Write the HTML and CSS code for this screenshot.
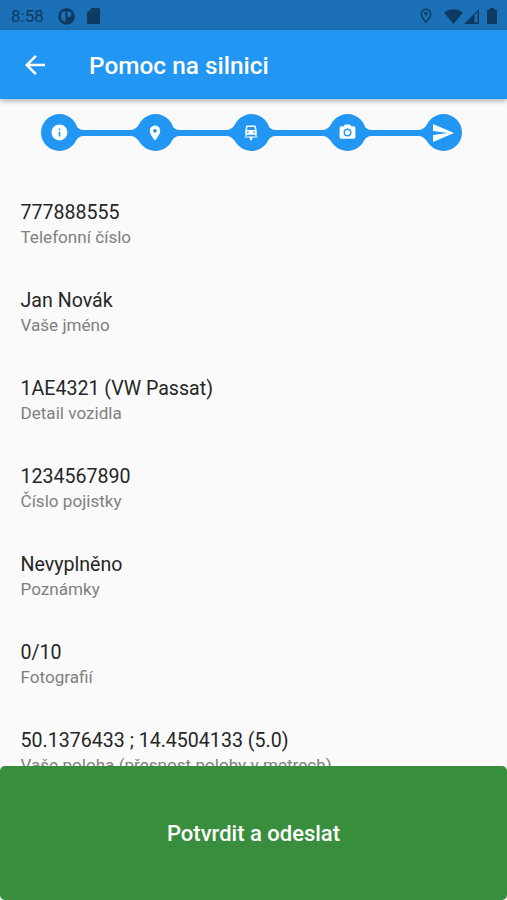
FILE: index.html
```html
<!DOCTYPE html>
<html lang="cs">
<head>
  <meta charset="UTF-8">
  <title>Pomoc na silnici</title>
  <link rel="stylesheet" href="styles.css">
</head>
<body>
  <div class="statusbar">
    <span class="time">8:58</span>
    <svg class="app-icon" width="17" height="17" viewBox="0 0 17 17"><circle cx="8.5" cy="8.5" r="8.3" fill="#0c3a60"/><path d="M3.600 4.500q1-1 2.300-1.200h1.600v10.500q-4.500-1-4.700-5z" fill="#1b70b6"/><path d="M9.200 3.500h1.500a2.700 2.700 0 0 1 0 5.400H9.200z" fill="#1b70b6"/></svg>
    <svg class="sd-icon" width="13" height="16" viewBox="4 2 16 20" preserveAspectRatio="none"><path fill="#0c3a60" d="M18 2h-8L4 8v12c0 1.100.9 2 2 2h12c1.100 0 2-.9 2-2V4c0-1.100-.9-2-2-2z"/><path d="M10 5v3M13 5v3M16 5v3" stroke="#164f80" stroke-width="1.200"/></svg>
    <span class="spacer"></span>
    <svg class="pin-icon" width="12" height="16" viewBox="0 0 12 16"><path d="M6 1.200a4.600 4.600 0 0 0-4.600 4.600C1.400 9.200 6 14.300 6 14.300s4.600-5.100 4.600-8.500A4.600 4.600 0 0 0 6 1.200z" fill="none" stroke="#0c3a60" stroke-width="1.400"/><circle cx="6" cy="5.800" r="1.700" fill="#0c3a60"/></svg>
    <svg class="wifi-icon" width="19" height="15" viewBox="0 0 19 15"><path d="M0 3.600Q9.500-3.200 19 3.600L9.500 15z" fill="#0c3a60"/></svg>
    <svg class="signal-icon" width="15" height="15" viewBox="0 0 15 15"><path d="M15 0v15H0z" fill="#0c3a60"/><path d="M10.600 6l2.900-2.800v10.300h-2.900z" fill="#1b70b6"/></svg>
    <svg class="battery-icon" width="10" height="16" viewBox="0 0 10 16"><path d="M3 0h4v1.600h2q1 0 1 1V15q0 1-1 1H1q-1 0-1-1V2.600q0-1 1-1h2z" fill="#0c3a60"/></svg>
  </div>

  <header class="toolbar">
    <svg class="back" width="30" height="30" viewBox="0 0 24 24"><path fill="#fff" d="M20 11H7.830l5.590-5.590L12 4l-8 8 8 8 1.410-1.410L7.830 13H20v-2z"/></svg>
    <h1>Pomoc na silnici</h1>
  </header>

  <nav class="stepper">
    <div class="step">
      <svg width="19" height="19" viewBox="0 0 24 24"><path d="M12 2C6.480 2 2 6.480 2 12s4.480 10 10 10 10-4.480 10-10S17.520 2 12 2zm1 15h-2v-6h2v6zm0-8h-2V7h2v2z"/></svg>
    </div>
    <svg class="connector" width="68" height="24" viewBox="0 0 68 24"><path d="M0 1Q5 9 10 9H58Q63 9 68 1V23Q63 15 58 15H10Q5 15 0 23z"/></svg>
    <div class="step">
      <svg width="18" height="18" viewBox="0 0 24 24"><path d="M12 2C8.130 2 5 5.130 5 9c0 5.250 7 13 7 13s7-7.750 7-13c0-3.870-3.130-7-7-7zm0 9.500c-1.380 0-2.500-1.120-2.500-2.500s1.120-2.500 2.500-2.500 2.500 1.120 2.500 2.500-1.120 2.500-2.500 2.500z"/></svg>
    </div>
    <svg class="connector" width="68" height="24" viewBox="0 0 68 24"><path d="M0 1Q5 9 10 9H58Q63 9 68 1V23Q63 15 58 15H10Q5 15 0 23z"/></svg>
    <div class="step">
      <!-- car being towed -->
      <svg width="14" height="16" viewBox="0 0 14 16"><path fill-rule="evenodd" d="M3.300.5h7.400q1 0 1.200 1l.8 4v5.200h-1.500v-1H2.800v1H1.300V5.500l.8-4q.200-1 1.200-1zM3.500 1.900L2.900 5.100h8.200l-.6-3.200zM3.100 6.600v1.500h1.500V6.600zm6.300 0v1.500h1.500V6.600z"/><path d="M.5 11.400h13v1.200H8.400l-.5 2.600H6.100l-.5-2.600H.5z"/></svg>
    </div>
    <svg class="connector" width="68" height="24" viewBox="0 0 68 24"><path d="M0 1Q5 9 10 9H58Q63 9 68 1V23Q63 15 58 15H10Q5 15 0 23z"/></svg>
    <div class="step">
      <svg width="19" height="19" viewBox="0 0 24 24"><path fill-rule="evenodd" d="M9 2L7.170 4H4c-1.100 0-2 .9-2 2v12c0 1.100.9 2 2 2h16c1.100 0 2-.9 2-2V6c0-1.100-.9-2-2-2h-3.170L15 2H9zm3 5a5 5 0 1 1 0 10 5 5 0 0 1 0-10z"/><circle cx="12" cy="12" r="3.200"/></svg>
    </div>
    <svg class="connector" width="68" height="24" viewBox="0 0 68 24"><path d="M0 1Q5 9 10 9H58Q63 9 68 1V23Q63 15 58 15H10Q5 15 0 23z"/></svg>
    <div class="step">
      <svg width="24" height="24" viewBox="0 0 24 24"><path d="M2.010 21L23 12 2.010 3 2 10l15 2-15 2z"/></svg>
    </div>
  </nav>

  <main class="list">
    <div class="item">
      <div class="value">777888555</div>
      <div class="label">Telefonní číslo</div>
    </div>
    <div class="item">
      <div class="value">Jan Novák</div>
      <div class="label">Vaše jméno</div>
    </div>
    <div class="item">
      <div class="value">1AE4321 (VW Passat)</div>
      <div class="label">Detail vozidla</div>
    </div>
    <div class="item">
      <div class="value">1234567890</div>
      <div class="label">Číslo pojistky</div>
    </div>
    <div class="item">
      <div class="value">Nevyplněno</div>
      <div class="label">Poznámky</div>
    </div>
    <div class="item">
      <div class="value">0/10</div>
      <div class="label">Fotografií</div>
    </div>
    <div class="item">
      <div class="value">50.1376433 ; 14.4504133 (5.0)</div>
      <div class="label">Vaše poloha (přesnost polohy v metrech)</div>
    </div>
  </main>

  <button class="submit">Potvrdit a odeslat</button>
</body>
</html>
```

FILE: styles.css
```css
* {
  box-sizing: border-box;
}
body {
  margin: 0;
  height: 900px;
  display: flex;
  flex-direction: column;
  overflow: hidden;
  background-color: #fafafa;
  font-family: Roboto, sans-serif;
}
svg {
  display: block;
  flex: none;
}
.statusbar {
  height: 30px;
  flex: none;
  display: flex;
  align-items: center;
  padding: 2px 10px 0 11px;
  background-color: #1b70b6;
  color: #0c3a60;
}
.time {
  width: 47px;
  font-size: 17px;
}
.sd-icon {
  margin-left: 12px;
}
.spacer {
  flex: 1;
}
.wifi-icon {
  margin-left: 12px;
}
.signal-icon {
  margin-left: 1px;
}
.battery-icon {
  margin-left: 8px;
}
.toolbar {
  height: 69px;
  flex: none;
  display: flex;
  align-items: center;
  padding-left: 20px;
  background-color: #2196f3;
  box-shadow: 0 2px 5px rgba(0, 0, 0, 0.3);
}
.toolbar h1 {
  margin: 2px 0 0 39px;
  color: #fff;
  font-size: 24.4px;
  font-weight: 500;
}
.stepper {
  height: 67px;
  flex: none;
  display: flex;
  align-items: center;
  padding-left: 40.5px;
}
.step {
  width: 37px;
  height: 37px;
  flex: none;
  display: flex;
  align-items: center;
  justify-content: center;
  border-radius: 50%;
  background-color: #2196f3;
  fill: #fff;
}
.connector {
  margin: 0 -4.5px;
  fill: #2196f3;
}
.list {
  flex: 1;
  min-height: 0;
  overflow: hidden;
  padding: 34px 20.5px 0;
}
.item {
  height: 88px;
}
.value {
  color: #262626;
  font-size: 19.6px;
  line-height: 26px;
}
.label {
  color: #808080;
  font-size: 17.1px;
  line-height: 22px;
}
.submit {
  height: 134px;
  flex: none;
  border: none;
  border-radius: 5px;
  background-color: #388e3c;
  color: #fff;
  font-family: inherit;
  font-size: 22px;
  font-weight: 500;
}
```
